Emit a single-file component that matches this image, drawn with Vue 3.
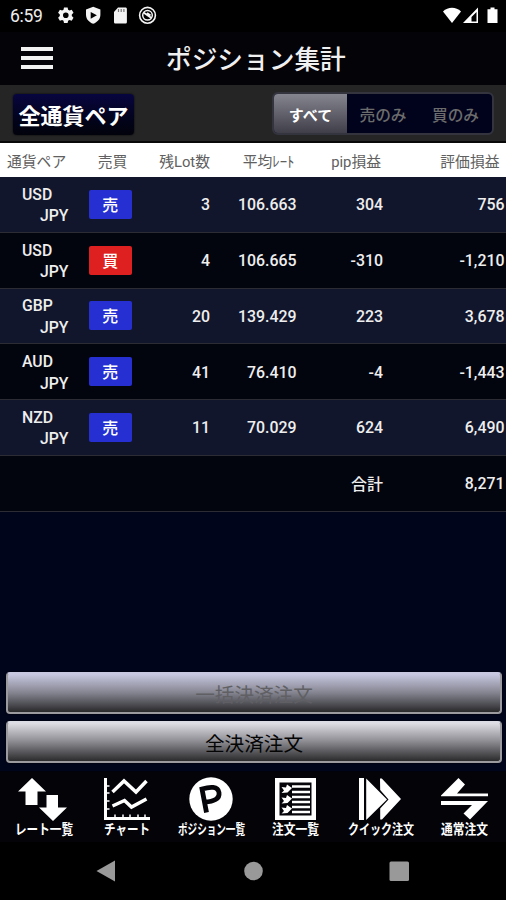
<template>
  <div class="app">
    <div class="status-bar">
      <span class="clock">6:59</span>
      <svg class="status-left" width="100" height="20" viewBox="0 0 100 20">
        <g fill="#f4f4f4" fill-rule="evenodd">
          <path d="M7 1.500h3.600l.5 2.300 1.400.8 2.200-.8 1.800 3-1.700 1.600v1.700l1.700 1.600-1.800 3-2.200-.7-1.400.8-.5 2.300H7l-.5-2.300-1.400-.8-2.200.7-1.800-3 1.700-1.600V8.400L1.100 6.800l1.800-3 2.200.8 1.400-.8zM8.800 6.500a2.800 2.800 0 1 0 0 5.600 2.800 2.800 0 0 0 0-5.600z" />
          <path d="M36.200.8l7.200 2.700v5.200c0 4.500-3 7.300-7.200 9.100-4.200-1.800-7.200-4.600-7.200-9.100V3.500zM33.700 5.900v6.800l6.200-3.400z" />
          <path d="M61 1.500h7.300c1 0 1.600.6 1.600 1.600v12.800c0 1-.6 1.600-1.600 1.600H58.600c-1 0-1.600-.6-1.600-1.600V6z" />
        </g>
        <path d="M61.500 3v3M64.200 3v3M66.900 3v3" stroke="#777" stroke-width="1.200" />
        <g fill="none" stroke="#f4f4f4">
          <circle cx="90.500" cy="9.300" r="7.900" stroke-width="1.600" />
          <circle cx="90.500" cy="9.300" r="4.800" stroke-width="1.500" />
          <path d="M86.500 6.500l8 5.500M90 7l3.500 2.500" stroke-width="2" />
        </g>
      </svg>
      <svg class="status-right" width="56" height="20" viewBox="0 0 56 20">
        <path d="M0 5.500C5 .6 13 .6 18 5.500L9 17z" fill="#fff" />
        <path d="M20 17L35 1.500V17zM28.500 11v4.500h5V6z" fill="#fff" fill-rule="evenodd" />
        <path d="M47.500 1.500h4v1.800h3V17h-10V3.300h3z" fill="#fff" />
      </svg>
    </div>

    <header class="title-bar">
      <div class="menu"><i></i><i></i><i></i></div>
      <h1>ポジション集計</h1>
    </header>

    <div class="filter-bar">
      <button class="pair-btn">全通貨ペア</button>
      <div class="segment">
        <button
          v-for="f in filters"
          :key="f"
          :class="{ active: f === filter }"
          @click="filter = f"
        >{{ f }}</button>
      </div>
    </div>

    <div class="table-head">
      <span class="h-pair">通貨ペア</span>
      <span class="h-side">売買</span>
      <span>残Lot数</span>
      <span class="h-rate">平均ﾚｰﾄ</span>
      <span class="h-pip">pip損益</span>
      <span class="h-value">評価損益</span>
    </div>
    <div class="rows">
      <div v-for="(p, i) in shown" :key="i" class="row">
        <div class="pair"><span>{{ p.base }}</span><span class="quote">JPY</span></div>
        <span class="side" :class="{ buy: p.side === '買' }">{{ p.side }}</span>
        <span class="num">{{ p.lot }}</span>
        <span class="num">{{ p.rate }}</span>
        <span class="num">{{ p.pip }}</span>
        <span class="num">{{ p.value }}</span>
      </div>
      <div class="row total">
        <span class="total-label">合計</span>
        <span class="num">8,271</span>
      </div>
    </div>

    <div class="actions">
      <button class="action disabled" disabled><span>一括決済注文</span></button>
      <button class="action">全決済注文</button>
    </div>

    <nav class="tabs">
      <svg width="506" height="70" viewBox="0 0 506 70">
        <g fill="#fff">
          <path d="M32 6l14 13.500h-8.500V33H25.500V19.500H18z" />
          <path d="M46.500 23h11.500v12.500h9L53 49 39 35.500h7.500z" />
          <circle cx="211" cy="27" r="21.700" />
          <path d="M275 6h41v42h-41z" />
          <path d="M359 6h5v42h-5zM366.200 6.500L387 27.500 366.200 48zM380 6.500h1.800L401 27l-19 20.500h-1.800v-11l8.300-9-8.300-9.500z" />
          <path d="M441 23.500L458.500 6l6.500 6.500-8 9h31v2.700h-47zM441 29h47l-18 18.500-6.500-6 8.500-8.500h-31z" />
        </g>
        <g fill="none" stroke="#fff">
          <path d="M105.500 6v40.500H150" stroke-width="3" />
          <path d="M106 14h3.500M106 21h3.500M106 29h3.500M106 37h3.500M115 46v-3.500M123 46v-3.500M130 46v-3.500M138 46v-3.500M145 46v-3.500" stroke-width="1.500" />
          <path d="M112.500 20l11.500-11 12 11L146.500 9M112.500 34l12-5.500 7 6.500 15-8" stroke-width="3.500" />
        </g>
        <path d="M206.500 40.500l-4.500-23.500c8-2.500 16-3 17 3.500 1 6.500-5.500 9-14 9.500" fill="none" stroke="#05050a" stroke-width="4.800" />
        <path d="M279.500 10.500h32v33h-32z" fill="#05050a" />
        <path d="M292 14.500h18M292 20h18M292 25h18M292 30h18M292 35h18M292 40h18" stroke="#fff" stroke-width="2.300" />
        <path
          v-for="y in [12.5, 23, 33]"
          :key="y"
          :transform="`translate(281 ${y})`"
          d="M.5 2.500l4.500.5 1-3 5 3.500-4.500 4.500-6 .5L3 6z"
          fill="#fff"
        />
        <text
          v-for="t in tabs"
          :key="t.name"
          class="tab-label"
          :x="t.x"
          y="62"
          :textLength="t.w"
          lengthAdjust="spacingAndGlyphs"
        >{{ t.name }}</text>
      </svg>
    </nav>

    <div class="system-nav">
      <svg width="506" height="58" viewBox="0 0 506 58" fill="#999">
        <path d="M96.500 29L115 18.500v21z" />
        <circle cx="253.500" cy="29" r="9.300" />
        <rect x="389.500" y="19.500" width="19.500" height="19.500" rx="1.500" />
      </svg>
    </div>
  </div>
</template>

<script setup>
import { ref, computed } from 'vue'

const filters = ['すべて', '売のみ', '買のみ']
const filter = ref('すべて')

const positions = [
  { base: 'USD', side: '売', lot: '3', rate: '106.663', pip: '304', value: '756' },
  { base: 'USD', side: '買', lot: '4', rate: '106.665', pip: '-310', value: '-1,210' },
  { base: 'GBP', side: '売', lot: '20', rate: '139.429', pip: '223', value: '3,678' },
  { base: 'AUD', side: '売', lot: '41', rate: '76.410', pip: '-4', value: '-1,443' },
  { base: 'NZD', side: '売', lot: '11', rate: '70.029', pip: '624', value: '6,490' }
]
const shown = computed(() =>
  filter.value === 'すべて' ? positions : positions.filter(p => p.side === filter.value[0])
)

const tabs = [
  { name: 'レート一覧', x: 15, w: 58 },
  { name: 'チャート', x: 104, w: 46 },
  { name: 'ポジション一覧', x: 178, w: 67 },
  { name: '注文一覧', x: 272, w: 47 },
  { name: 'クイック注文', x: 348, w: 66 },
  { name: '通常注文', x: 441, w: 47 }
]
</script>

<style>
body {
  background: #000;
}
</style>

<style scoped>
.app {
  width: 506px;
  height: 900px;
  display: flex;
  flex-direction: column;
  overflow: hidden;
  background: #01051c;
  color: #eee;
  font-family: Roboto, "Noto Sans CJK JP", sans-serif;
}
button {
  font-family: inherit;
  border: none;
  padding: 0;
}
svg {
  display: block;
}
.status-bar {
  height: 32px;
  flex: none;
  display: flex;
  align-items: center;
  background: #000;
}
.clock {
  width: 47px;
  padding-left: 10px;
  font-size: 17.5px;
  letter-spacing: -0.3px;
}
.status-right {
  margin-left: auto;
  margin-right: 7px;
}
.title-bar {
  height: 53px;
  flex: none;
  display: flex;
  align-items: center;
  background: #030308;
}
.menu {
  width: 32px;
  margin-left: 21px;
  padding-bottom: 2px;
  display: flex;
  flex-direction: column;
  gap: 5px;
}
.menu i {
  height: 4px;
  background: #f2f2f2;
}
h1 {
  margin: 0 0 0 113px;
  padding-top: 2px;
  font-size: 25.7px;
  font-weight: 500;
  line-height: 40px;
  color: #f0f0f0;
}
.filter-bar {
  height: 58px;
  flex: none;
  box-sizing: border-box;
  display: flex;
  align-items: center;
  justify-content: space-between;
  padding: 0 12px 0 13px;
  background: #252525;
  border-bottom: 2px solid #080808;
}
.pair-btn {
  width: 121px;
  height: 41px;
  margin-top: 2px;
  border-radius: 4px;
  background: linear-gradient(#07053f, #02031a 65%, #02020c);
  box-shadow: 0 0 2px #000;
  color: #fff;
  font-size: 22px;
  font-weight: 700;
}
.segment {
  width: 222px;
  height: 43px;
  margin-top: 1px;
  box-sizing: border-box;
  display: grid;
  grid-template-columns: 73px 72px 1fr;
  border: 2px solid #34343f;
  border-radius: 6px;
  overflow: hidden;
  background: #01031c;
}
.segment button {
  background: none;
  color: #6c6c6c;
  font-size: 15.7px;
  font-weight: 500;
  padding-top: 2px;
}
.segment button.active {
  background: linear-gradient(#85858f, #403f49);
  color: #fff;
  font-weight: 700;
  font-size: 15px;
}
.table-head,
.row {
  display: grid;
  grid-template-columns: 88px 44px 78px 86.5px 86.5px 121.5px;
  align-items: center;
  text-align: right;
}
.table-head {
  height: 34px;
  flex: none;
  background: #fff;
  color: #606060;
  font-size: 14.8px;
}
.h-pair {
  text-align: left;
  padding-left: 7px;
}
.h-side {
  text-align: center;
  padding-left: 5px;
}
.h-rate,
.h-pip {
  padding-right: 2px;
}
.h-value {
  padding-right: 5px;
}
.row {
  height: 55.75px;
  box-sizing: border-box;
  border-bottom: 1.5px solid #2b2c34;
  background: #12162c;
  font-size: 16px;
  font-weight: 500;
}
.row:nth-child(even) {
  background: #02040e;
}
.num {
  padding-top: 1px;
  font-size: 15.9px;
}
.pair {
  display: flex;
  flex-direction: column;
  padding: 2px 0 0 22px;
  text-align: left;
  font-size: 15.8px;
  line-height: 21.5px;
}
.quote {
  padding-left: 18px;
}
.side {
  height: 29px;
  line-height: 31px;
  margin-left: 0.5px;
  border-radius: 2px;
  background: #2630d2;
  color: #fff;
  text-align: center;
}
.side.buy {
  background: #de2020;
}
.row.total {
  background: #02040e;
}
.total-label {
  grid-column: 1 / 6;
}
.actions {
  margin-top: auto;
  padding: 0 4px 8px 6px;
  display: flex;
  flex-direction: column;
  gap: 7px;
}
.action {
  height: 42px;
  border: 2px solid #9a9a9f;
  border-top-color: #dcdce4;
  border-radius: 4px;
  background: linear-gradient(#dedee4, #929298 45%, #2b2b2d);
  box-shadow: 0 0 2px #000;
  color: #050505;
  font-size: 19.6px;
}
.action.disabled {
  border-top-color: #c8c8e0;
  background: linear-gradient(#c9c9e2, #83838f 50%, #29292b);
  color: #606064;
}
.tabs {
  height: 70px;
  flex: none;
  background: #030308;
  border-top: 1px solid #02020a;
}
.tab-label {
  fill: #fff;
  font-size: 14px;
  font-weight: 700;
}
.system-nav {
  height: 58px;
  flex: none;
  background: #000;
}
</style>
